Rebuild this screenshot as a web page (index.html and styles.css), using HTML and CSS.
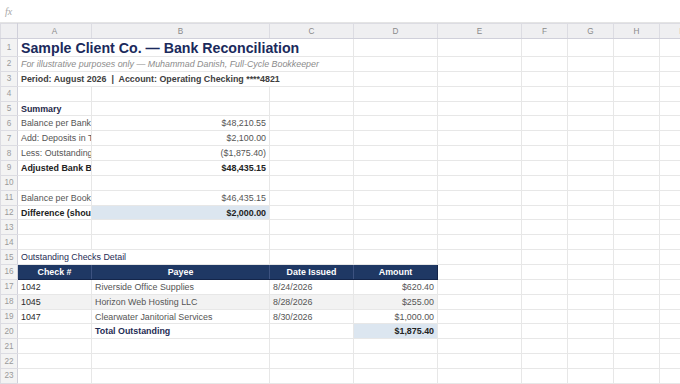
FILE: index.html
```html
<!DOCTYPE html>
<html lang="en">

<head>
    <meta charset="UTF-8">
    <meta name="viewport" content="width=device-width, initial-scale=1.0">
    <title>Bank Reconciliation</title>
    <link rel="stylesheet" href="styles.css">
</head>

<body>
    <div class="fxbar"><span class="fx">fx</span></div>
    <table class="sheet">
        <colgroup>
            <col class="c-rh"><col class="c-a"><col class="c-b"><col class="c-mid"><col class="c-mid">
            <col class="c-mid"><col class="c-sm"><col class="c-sm"><col class="c-sm"><col class="c-end">
        </colgroup>
        <tr class="cols">
            <th class="corner"></th><th>A</th><th>B</th><th>C</th><th>D</th><th>E</th><th>F</th><th>G</th><th>H</th><th>I</th>
        </tr>
        <tr class="r1">
            <th>1</th><td colspan="3" class="title">Sample Client Co. — Bank Reconciliation</td><td></td><td></td><td></td><td></td><td></td><td></td>
        </tr>
        <tr>
            <th>2</th><td colspan="3" class="sub">For illustrative purposes only — Muhammad Danish, Full-Cycle Bookkeeper</td><td></td><td></td><td></td><td></td><td></td><td></td>
        </tr>
        <tr>
            <th>3</th><td colspan="3" class="period">Period: August 2026 &nbsp;|&nbsp; Account: Operating Checking ****4821</td><td></td><td></td><td></td><td></td><td></td><td></td>
        </tr>
        <tr>
            <th>4</th><td></td><td></td><td></td><td></td><td></td><td></td><td></td><td></td><td></td>
        </tr>
        <tr>
            <th>5</th><td class="sec">Summary</td><td></td><td></td><td></td><td></td><td></td><td></td><td></td><td></td>
        </tr>
        <tr>
            <th>6</th><td class="lbl">Balance per Bank Statement</td><td class="num">$48,210.55</td><td></td><td></td><td></td><td></td><td></td><td></td><td></td>
        </tr>
        <tr>
            <th>7</th><td class="lbl">Add: Deposits in Transit</td><td class="num">$2,100.00</td><td></td><td></td><td></td><td></td><td></td><td></td><td></td>
        </tr>
        <tr>
            <th>8</th><td class="lbl">Less: Outstanding Checks</td><td class="num">($1,875.40)</td><td></td><td></td><td></td><td></td><td></td><td></td><td></td>
        </tr>
        <tr>
            <th>9</th><td class="lbl strong">Adjusted Bank Balance</td><td class="num strong">$48,435.15</td><td></td><td></td><td></td><td></td><td></td><td></td><td></td>
        </tr>
        <tr>
            <th>10</th><td></td><td></td><td></td><td></td><td></td><td></td><td></td><td></td><td></td>
        </tr>
        <tr>
            <th>11</th><td class="lbl">Balance per Books</td><td class="num">$46,435.15</td><td></td><td></td><td></td><td></td><td></td><td></td><td></td>
        </tr>
        <tr>
            <th>12</th><td class="lbl strong">Difference (should be zero)</td><td class="num strong hl">$2,000.00</td><td></td><td></td><td></td><td></td><td></td><td></td><td></td>
        </tr>
        <tr>
            <th>13</th><td></td><td></td><td></td><td></td><td></td><td></td><td></td><td></td><td></td>
        </tr>
        <tr>
            <th>14</th><td></td><td></td><td></td><td></td><td></td><td></td><td></td><td></td><td></td>
        </tr>
        <tr>
            <th>15</th><td colspan="2" class="sec2">Outstanding Checks Detail</td><td></td><td></td><td></td><td></td><td></td><td></td><td></td>
        </tr>
        <tr class="thead">
            <th>16</th><td class="h">Check #</td><td class="h">Payee</td><td class="h">Date Issued</td><td class="h">Amount</td><td></td><td></td><td></td><td></td><td></td>
        </tr>
        <tr>
            <th>17</th><td class="id">1042</td><td class="lbl">Riverside Office Supplies</td><td class="lbl">8/24/2026</td><td class="num">$620.40</td><td></td><td></td><td></td><td></td><td></td>
        </tr>
        <tr class="alt">
            <th>18</th><td class="id">1045</td><td class="lbl">Horizon Web Hosting LLC</td><td class="lbl">8/28/2026</td><td class="num">$255.00</td><td></td><td></td><td></td><td></td><td></td>
        </tr>
        <tr>
            <th>19</th><td class="id">1047</td><td class="lbl">Clearwater Janitorial Services</td><td class="lbl">8/30/2026</td><td class="num">$1,000.00</td><td></td><td></td><td></td><td></td><td></td>
        </tr>
        <tr>
            <th>20</th><td></td><td class="total">Total Outstanding</td><td></td><td class="num strong hl">$1,875.40</td><td></td><td></td><td></td><td></td><td></td>
        </tr>
        <tr>
            <th>21</th><td></td><td></td><td></td><td></td><td></td><td></td><td></td><td></td><td></td>
        </tr>
        <tr>
            <th>22</th><td></td><td></td><td></td><td></td><td></td><td></td><td></td><td></td><td></td>
        </tr>
        <tr>
            <th>23</th><td></td><td></td><td></td><td></td><td></td><td></td><td></td><td></td><td></td>
        </tr>
        <tr>
            <th>24</th><td></td><td></td><td></td><td></td><td></td><td></td><td></td><td></td><td></td>
        </tr>
    </table>
</body>

</html>
```

FILE: styles.css
```css
* {
    margin: 0;
    padding: 0;
    box-sizing: border-box;
}

html,
body {
    background: #fff;
    overflow: hidden;
    font-family: "Liberation Sans", Arial, sans-serif;
}

.fxbar {
    height: 23px;
    display: flex;
    align-items: center;
    padding-left: 5px;
    border-bottom: 1px solid #e4e4e4;
}

.fx {
    font-family: "Liberation Serif", serif;
    font-style: italic;
    font-size: 10px;
    color: #a8a8a8;
}

.sheet {
    table-layout: fixed;
    border-collapse: collapse;
    width: 700px;
    font-size: 8.9px;
    color: #555;
}

.c-rh { width: 17px; }
.c-a { width: 74px; }
.c-b { width: 178px; }
.c-mid { width: 84px; }
.c-sm { width: 46px; }
.c-end { width: 42px; }

.sheet td,
.sheet th {
    height: 14.86px;
    border: 1px solid #e7e7e7;
    padding: 0 3px;
    white-space: nowrap;
    overflow: hidden;
    vertical-align: middle;
}

.sheet th {
    background: #f3f3f3;
    color: #9a9a9a;
    font-size: 8.2px;
    font-weight: normal;
    text-align: center;
    padding: 0;
    border-color: #dcdce2;
}

.sheet .cols th {
    height: 15px;
    background: #efeff1;
    color: #8a8a8a;
    border-bottom-color: #d0d0da;
}

.sheet tr th:first-child {
    border-right-color: #d0d0da;
}

.sheet .r1 td,
.sheet .r1 th {
    height: 18px;
}

.title {
    font-size: 14.2px;
    font-weight: bold;
    color: #1b2a5c;
}

.sub {
    font-style: italic;
    color: #8c8c8c;
}

.period {
    font-weight: bold;
    color: #404040;
}

.sec {
    font-weight: bold;
    color: #1f2a4a;
}

.sec2 {
    color: #1f2d55;
}

.lbl {
    color: #555;
}

.num {
    text-align: right;
    color: #555;
}

.strong {
    font-weight: bold;
    color: #222;
}

.hl {
    background: #dce6f0;
}

.thead .h {
    background: #1f3864;
    color: #fff;
    font-weight: bold;
    text-align: center;
    border-color: #3d5280;
    border-top-color: #14254a;
    border-bottom-color: #14254a;
}

.thead .h:first-of-type {
    border-left-color: #14254a;
}

.thead .h:nth-of-type(4) {
    border-right-color: #14254a;
}

.alt td:nth-of-type(-n+4) {
    background: #f2f2f2;
}

.id {
    color: #2a2a2a;
}

.total {
    font-weight: bold;
    color: #1f2d55;
}
```
